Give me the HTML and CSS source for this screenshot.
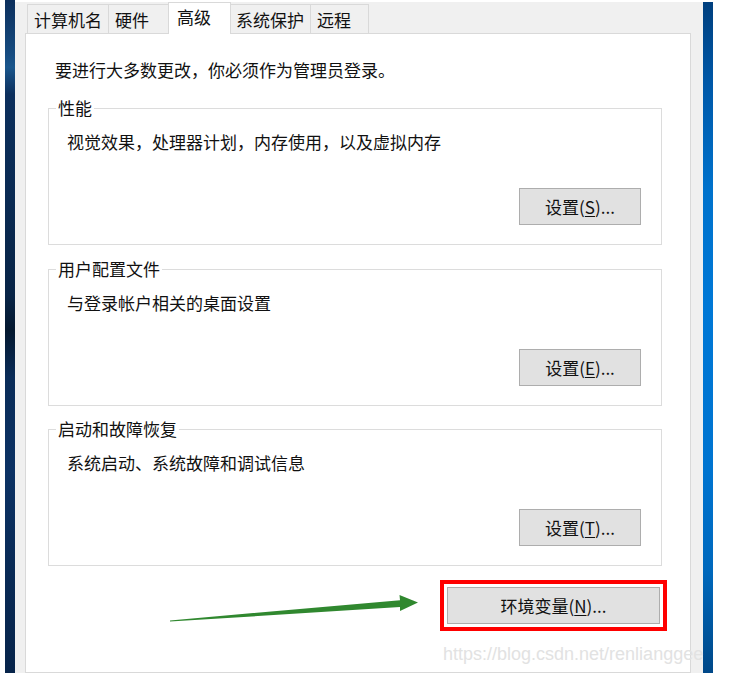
FILE: index.html
```html
<!DOCTYPE html>
<html lang="zh-CN">
<head>
<meta charset="utf-8">
<title>系统属性 - 高级</title>
<link rel="stylesheet" href="styles.css">
</head>
<body>
<div class="screen">
  <div class="edge edge-left"></div>
  <div class="dialog">
    <div class="tabs">
      <div class="tab">计算机名</div>
      <div class="tab">硬件</div>
      <div class="tab tab-active">高级</div>
      <div class="tab">系统保护</div>
      <div class="tab">远程</div>
    </div>
    <div class="panel">
      <p class="intro">要进行大多数更改，你必须作为管理员登录。</p>
      <fieldset class="group">
        <legend>性能</legend>
        <p class="desc">视觉效果，处理器计划，内存使用，以及虚拟内存</p>
        <button class="btn">设置(<u>S</u>)...</button>
      </fieldset>
      <fieldset class="group">
        <legend>用户配置文件</legend>
        <p class="desc">与登录帐户相关的桌面设置</p>
        <button class="btn">设置(<u>E</u>)...</button>
      </fieldset>
      <fieldset class="group">
        <legend>启动和故障恢复</legend>
        <p class="desc">系统启动、系统故障和调试信息</p>
        <button class="btn">设置(<u>T</u>)...</button>
      </fieldset>
      <div class="env-row">
        <div class="highlight">
          <button class="btn btn-env">环境变量(<u>N</u>)...</button>
        </div>
      </div>
    </div>
  </div>
  <div class="edge edge-right"></div>
</div>
<svg class="arrow" width="260" height="36" viewBox="0 0 260 36" aria-hidden="true">
  <polygon points="5,30.4 235,10.2 234.5,5 253,12.6 235,21 235,17 5,31.6" fill="#30882f"/>
</svg>
<div class="watermark">https://blog.csdn.net/renlianggee</div>
</body>
</html>
```
FILE: styles.css
```css
* { box-sizing: border-box; }

body {
  margin: 0;
  width: 732px;
  height: 686px;
  overflow: hidden;
  position: relative;
  background: #ffffff;
  font-family: "Noto Sans CJK SC", "Noto Sans", sans-serif;
  font-size: 17px;
  color: #111111;
}

.screen {
  display: flex;
  margin-left: 5px;
  width: 708px;
  height: 673px;
}

.edge {
  width: 10px;
  flex: none;
}

.edge-left {
  background: linear-gradient(to bottom,
    #0c2f5c 0%, #164b80 8%, #1a568c 10%, #0c2f5c 14%,
    #0a2a52 30%, #082446 44%, #04182f 49%, #0a2c58 56%,
    #0c3264 70%, #092a55 85%, #07244a 100%);
}

.edge-right {
  margin-top: 2px;
  background: linear-gradient(to bottom,
    #003f7e 0%, #0058a8 12%, #0072cc 28%, #0078d6 45%,
    #0074d0 70%, #0068bc 85%, #004888 100%);
}

.dialog {
  flex: 1;
  display: flex;
  flex-direction: column;
  margin-top: 2px;
  padding: 0 12px 0 10px;
  background: #f0f0f0;
}

.tabs {
  display: flex;
  align-items: flex-end;
  height: 31px;
  padding-left: 2px;
}

.tab {
  height: 29px;
  min-width: 62px;
  padding: 5px 6px 0 6px;
  line-height: 20px;
  white-space: nowrap;
  background: #f0f0f0;
  border-top: 1px solid #d9d9d9;
  border-left: 1px solid #d9d9d9;
}

.tab:last-child {
  min-width: 59px;
  border-right: 1px solid #d9d9d9;
}

.tab-active {
  position: relative;
  z-index: 1;
  height: 32px;
  min-width: 63px;
  margin: 0 -2px -1px -2px;
  padding: 4px 8px 0 8px;
  background: #ffffff;
  border-right: 1px solid #d9d9d9;
}

.panel {
  flex: 1;
  padding: 26px 28px 0 22px;
  background: #ffffff;
  border: 1px solid #d9d9d9;
}

.intro {
  margin: 0 0 0 7px;
  line-height: 20px;
}

.group {
  margin: 18px 0 0 0;
  min-inline-size: 0;
  padding: 14px 20px 19px 18px;
  border: 1px solid #dcdcdc;
}

.group + .group {
  margin-top: 14px;
}

.group:last-of-type {
  margin-top: 13px;
}

.group legend {
  margin-left: -11px;
  padding: 0 2px;
  line-height: 20px;
}

.desc {
  margin: 0;
  line-height: 20px;
}

.btn {
  display: block;
  width: 122px;
  height: 37px;
  margin: 36px 0 0 auto;
  padding: 0;
  font-family: inherit;
  font-size: 17px;
  line-height: 20px;
  color: #111111;
  background: #e1e1e1;
  border: 1px solid #adadad;
}

.btn u {
  text-underline-offset: 2px;
}

.env-row {
  display: flex;
  justify-content: flex-end;
  margin: 14px -5px 0 0;
}

.highlight {
  padding: 3px;
  background: #ffffff;
  border: 4px solid #ff0000;
}

.btn-env {
  width: 213px;
  margin: 0;
}

.arrow {
  position: absolute;
  left: 165px;
  top: 590px;
}

.watermark {
  position: absolute;
  left: 443px;
  top: 644px;
  font-family: "Liberation Sans", Arial, sans-serif;
  font-size: 18px;
  line-height: 21px;
  color: #e2e2e2;
  white-space: nowrap;
  pointer-events: none;
}
```
